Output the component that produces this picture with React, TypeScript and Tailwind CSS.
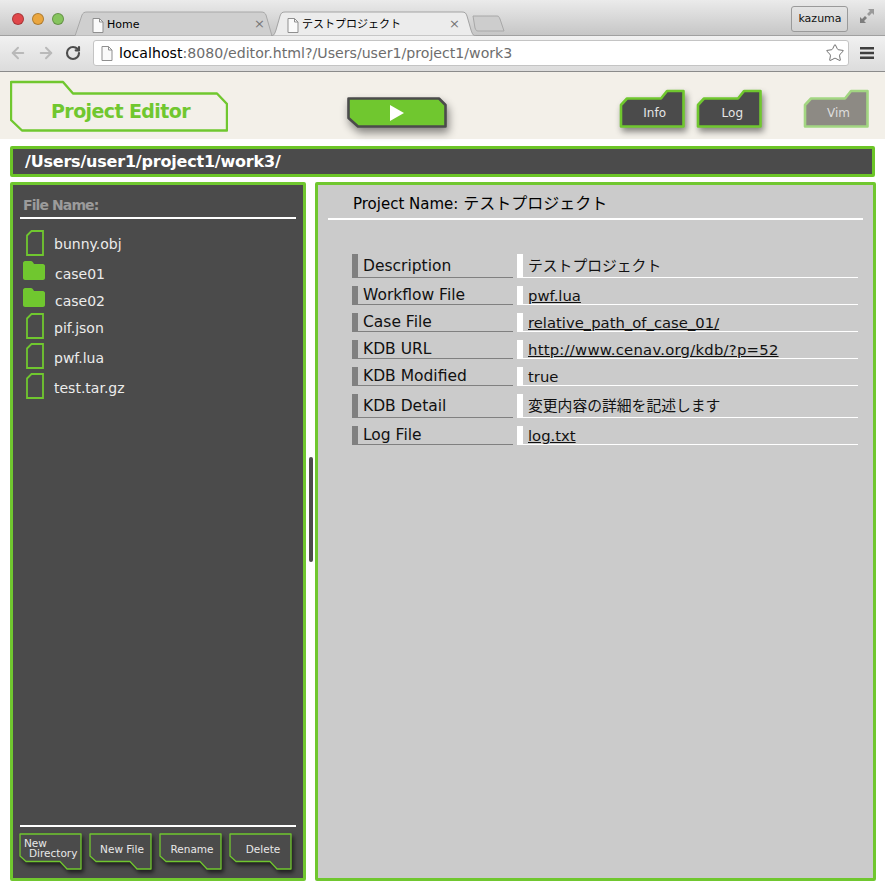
import { ArrowLeft, ArrowRight, RotateCw, Star } from 'lucide-react';
import type { ReactNode } from 'react';

const FONT = 'font-["DejaVu_Sans","Noto_Sans_CJK_JP",sans-serif]';
const GREEN = '#70c72f';

function PageIcon() {
  return (
    <svg width="12" height="15" viewBox="0 0 12 15" className="shrink-0">
      <path d="M1 .5H7.5L11 4V14.5H1Z" fill="#fafafa" stroke="#8f8f8f" />
      <path d="M7.5 .5V4H11" fill="none" stroke="#8f8f8f" />
    </svg>
  );
}

function Tab({ title, active, x }: { title: string; active?: boolean; x: string }) {
  return (
    <div className={`relative flex h-[25px] items-center pt-[3px] ${active ? 'w-[205px] -ml-[4px] pl-[16px] z-10' : 'w-[200px] pl-[17px]'}`}>
      <svg className="absolute inset-0" width="100%" height="25" viewBox={active ? '0 0 205 25' : '0 0 200 25'}>
        {active ? (
          <path d="M0 25C3 25 4 22 5 19L9 5C10 2 11 1 14 1H191C194 1 195 2 196 5L200 19C201 22 202 25 205 25Z" fill="#ececec" stroke="#a3a3a3" />
        ) : (
          <path d="M0 25L7 4C8 2 9 1 12 1H186C189 1 190 2 191 4L197 25Z" fill="#cfcfcf" stroke="#a8a8a8" />
        )}
      </svg>
      <div className="relative flex items-center gap-[3px]">
        <PageIcon />
        <span className="text-[11px] text-black">{title}</span>
      </div>
      <span className={`absolute top-[5px] text-[13px] leading-[16px] text-[#777] ${x}`}>×</span>
    </div>
  );
}

function Light({ color }: { color: string }) {
  return <span className={`h-[12px] w-[12px] rounded-full border border-black/25 ${color}`} />;
}

function BrowserChrome() {
  return (
    <div className="h-[72px] shrink-0">
      <div className="flex h-[36px] items-end border-b border-[#a0a0a0] bg-gradient-to-b from-[#ebebeb] to-[#c6c6c6]">
        <div className="flex w-[75px] shrink-0 gap-[8px] self-start pl-[12px] pt-[13px]">
          <Light color="bg-[#e0474a]" />
          <Light color="bg-[#eaa63f]" />
          <Light color="bg-[#86c45e]" />
        </div>
        <div className="flex -mb-px">
          <Tab title="Home" x="left-[179px]" />
          <Tab title="テストプロジェクト" active x="left-[178px]" />
        </div>
        <svg width="33" height="17" viewBox="0 0 33 17" className="mb-[3px] -ml-[4px] shrink-0">
          <path d="M1 1H25C27 1 27 2 28 4L32 16H6C4 16 4 15 3 13Z" fill="#cdcdcd" stroke="#a8a8a8" />
        </svg>
        <div className="flex-1" />
        <div className="mb-[3px] flex h-[26px] w-[57px] shrink-0 items-center justify-center rounded-[3px] border border-[#9a9a9a] bg-gradient-to-b from-[#e4e4e4] to-[#d2d2d2] pl-[1px] pt-[1px] text-[11px] text-[#111]">
          kazuma
        </div>
        <svg width="16" height="16" viewBox="0 0 16 16" className="mb-[11px] ml-[11px] mr-[10px] shrink-0">
          <path d="M9 1H15V7L13 5L10 8L8 6L11 3Z" fill="#9a9a9a" />
          <path d="M1 9V15H7L5 13L8 10L6 8L3 11Z" fill="#7d7d7d" />
        </svg>
      </div>
      <div className="flex h-[36px] items-center border-b border-[#8b8b8b] bg-gradient-to-b from-[#f1f1f1] to-[#dcdcdc] pb-[1px]">
        <ArrowLeft size={18} strokeWidth={2.6} className="ml-[9px] shrink-0 text-[#b9b9b9]" />
        <ArrowRight size={18} strokeWidth={2.6} className="ml-[10px] shrink-0 text-[#b9b9b9]" />
        <RotateCw size={16} strokeWidth={3.2} className="ml-[10px] shrink-0 text-[#4d4d4d]" />
        <div className="ml-[12px] flex h-[26px] w-[756px] shrink-0 items-center rounded-[3px] border border-[#c4c4c4] bg-white pl-[7px] pr-[3px]">
          <PageIcon />
          <span className="ml-[6px] flex-1 pt-[1px] text-[14.15px] text-[#6d6d6d]">
            <span className="text-black">localhost</span>:8080/editor.html?/Users/user1/project1/work3
          </span>
          <Star size={20} strokeWidth={1} className="shrink-0 text-[#555]" />
        </div>
        <svg width="14" height="14" viewBox="0 0 14 14" className="ml-[11px] shrink-0">
          <path d="M0 1H14V3.5H0ZM0 5.8H14V8.3H0ZM0 10.5H14V13H0Z" fill="#3f3f3f" />
        </svg>
      </div>
    </div>
  );
}

// 角を落としたボタン類はSVGで枠線を描く
function TabButton({ label, dim, left }: { label: string; dim?: boolean; left?: string }) {
  return (
    <div className={`relative mt-[17px] flex h-[39px] w-[66px] shrink-0 items-center justify-end pr-[19px] pt-[9px] ${left ?? ''}`}>
      <svg
        className={`absolute inset-0 ${dim ? '' : 'drop-shadow-[2px_4px_3px_rgba(0,0,0,0.45)]'}`}
        width="66"
        height="39"
        viewBox="0 0 66 39"
      >
        <path
          d="M2 16L8 9.5H42L48 2H64.500V37.500H2Z"
          fill={dim ? '#8d8a84' : '#4b4b4b'}
          stroke={dim ? '#a3d682' : GREEN}
          strokeWidth="2.600"
          strokeLinejoin="round"
        />
      </svg>
      <span className={`relative text-[12px] ${dim ? 'text-[#ddd]' : 'text-[#e6e6e6]'}`}>{label}</span>
    </div>
  );
}

function Header() {
  return (
    <div className="flex h-[67px] shrink-0 items-start bg-[#f3f0e9] pl-[10px]">
      <div className="relative mt-[8px] flex h-[52px] w-[218px] shrink-0 items-center justify-center pl-[3px] pt-[10px]">
        <svg className="absolute inset-0" width="218" height="52" viewBox="0 0 218 52">
          <path d="M1 2H53L63 13.500H207L217 24V50.500H12L1 40Z" fill="none" stroke={GREEN} strokeWidth="2.400" strokeLinejoin="round" />
        </svg>
        <span className="relative text-[19px] font-bold tracking-[-0.6px]" style={{ color: GREEN }}>Project Editor</span>
      </div>
      <div className="relative ml-[119px] mt-[25px] flex h-[31px] w-[100px] shrink-0 items-center justify-center">
        <svg className="absolute inset-0 drop-shadow-[2px_5px_4px_rgba(0,0,0,0.45)]" width="100" height="31" viewBox="0 0 100 31">
          <path d="M1.500 1.500H92L98.500 8V29.500H11L1.500 21Z" fill={GREEN} stroke="#4b4b4b" strokeWidth="2.600" strokeLinejoin="round" />
        </svg>
        <svg className="relative" width="14" height="16" viewBox="0 0 14 16">
          <path d="M0 0L14 8L0 16Z" fill="#fff" />
        </svg>
      </div>
      <TabButton label="Info" left="ml-[172px]" />
      <TabButton label="Log" left="ml-[11px]" />
      <TabButton label="Vim" dim left="ml-[41px]" />
    </div>
  );
}

function FileIcon() {
  return (
    <svg width="18" height="26" viewBox="0 0 18 26" className="ml-[3px] mr-[10px] shrink-0">
      <path d="M1 5.500L5.500 1H17V25H1Z" fill="none" stroke={GREEN} strokeWidth="1.800" />
    </svg>
  );
}

function FolderIcon() {
  return (
    <svg width="22" height="19" viewBox="0 0 22 19" className="mr-[10px] shrink-0">
      <path d="M0 2C0 1 1 0 2 0H8C9 0 10 1 11 3H20C21 3 22 4 22 5V17C22 18 21 19 20 19H2C1 19 0 18 0 17Z" fill={GREEN} />
    </svg>
  );
}

const files = [
  { name: 'bunny.obj', folder: false, cls: 'h-[30px] leading-[28px]' },
  { name: 'case01', folder: true, cls: 'h-[27px] pt-[1px] leading-[26px]' },
  { name: 'case02', folder: true, cls: 'h-[26px] pt-[1px] leading-[26px]' },
  { name: 'pif.json', folder: false, cls: 'h-[30px] leading-[30px]' },
  { name: 'pwf.lua', folder: false, cls: 'h-[30px] leading-[30px]' },
  { name: 'test.tar.gz', folder: false, cls: 'h-[30px] leading-[30px]' },
];

function ActionButton({ children, cls }: { children: ReactNode; cls?: string }) {
  return (
    <div className={`relative flex h-[37px] w-[63px] shrink-0 text-[10.5px] text-[#e8e8e8] ${cls ?? ''}`}>
      <svg className="absolute inset-0 drop-shadow-[2px_3px_2px_rgba(0,0,0,0.6)]" width="63" height="37" viewBox="0 0 63 37">
        <path d="M1 1H62V36H48L41 28.500H7L1 23Z" fill="#4b4b4b" stroke={GREEN} strokeWidth="1.300" strokeLinejoin="round" />
      </svg>
      {children}
    </div>
  );
}

function FilePanel() {
  return (
    <div className="flex h-[699px] w-[296px] shrink-0 flex-col rounded-[2px] border-[3px] border-[#70c72f] bg-[#4b4b4b] px-[7px] pb-[8px]">
      <div className="h-[32px] pl-[3px] pt-[10px] text-[14px] font-bold leading-[20px] tracking-[-0.9px] text-[#9b9b9b]">File Name:</div>
      <div className="h-[2px] bg-white" />
      <div className="mt-[11px] flex-1 pl-[3px]">
        {files.map((f) => (
          <div key={f.name} className={`flex items-start text-[14px] text-[#ececec] ${f.cls}`}>
            {f.folder ? <FolderIcon /> : <FileIcon />}
            <span>{f.name}</span>
          </div>
        ))}
      </div>
      <div className="h-[2px] bg-white" />
      <div className="mt-[6px] flex gap-[7px] -ml-px">
        <ActionButton>
          <span className="relative pl-[5px] pt-[5px] leading-[10px]">
            New
            <br />
            <span className="pl-[5px]">Directory</span>
          </span>
        </ActionButton>
        <ActionButton cls="items-start justify-center pl-[3px] pt-[9px]"><span className="relative">New File</span></ActionButton>
        <ActionButton cls="items-start justify-center pl-[3px] pt-[9px]"><span className="relative">Rename</span></ActionButton>
        <ActionButton cls="items-start justify-center pl-[5px] pt-[9px]"><span className="relative">Delete</span></ActionButton>
      </div>
    </div>
  );
}

const rows = [
  { label: 'Description', value: 'テストプロジェクト', h: 'h-[24px]' },
  { label: 'Workflow File', value: 'pwf.lua', link: true, h: 'h-[19px]' },
  { label: 'Case File', value: 'relative_path_of_case_01/', link: true, h: 'h-[19px]' },
  { label: 'KDB URL', value: 'http://www.cenav.org/kdb/?p=52', link: true, wide: true, h: 'h-[19px]' },
  { label: 'KDB Modified', value: 'true', h: 'h-[19px]' },
  { label: 'KDB Detail', value: '変更内容の詳細を記述します', h: 'h-[24px]' },
  { label: 'Log File', value: 'log.txt', link: true, h: 'h-[19px]' },
];

function InfoPanel() {
  return (
    <div className="h-[699px] w-[561px] shrink-0 rounded-[2px] border-[3px] border-[#70c72f] bg-[#cbcbcb] pl-[10px] pr-[10px]">
      <div className="h-[33px] pl-[25px] pt-[9px] text-[15px] leading-[20px] text-black">
        Project Name: <span className="text-[16px]">テストプロジェクト</span>
      </div>
      <div className="h-[2px] bg-white" />
      <div className="ml-[24px] mt-[34px] flex w-[506px] flex-col gap-[8px]">
        {rows.map((r) => (
          <div key={r.label} className={`flex gap-[4px] ${r.h}`}>
            <div className="flex w-[161px] items-center border-b border-l-[6px] border-[#808080] pl-[5px] pt-[2px] text-[15.5px] text-[#111]">
              {r.label}
            </div>
            <div className="flex flex-1 items-center border-b border-l-[6px] border-white pl-[5px] pt-[2px] text-[14.8px] text-[#111]">
              <span className={`${r.link ? 'underline' : ''} ${r.wide ? 'tracking-[0.25px]' : ''}`}>{r.value}</span>
            </div>
          </div>
        ))}
      </div>
    </div>
  );
}

export default function App() {
  return (
    <div className={`flex h-[891px] w-[885px] flex-col overflow-hidden bg-white ${FONT}`}>
      <BrowserChrome />
      <Header />
      <div className="mx-[10px] mt-[7px] flex h-[31px] items-center rounded-[2px] border-[3px] border-[#6cc527] bg-[#4b4b4b] pl-[12px] text-[16px] font-bold tracking-[-0.2px] text-white">
        /Users/user1/project1/work3/
      </div>
      <div className="mx-[10px] mt-[5px] flex items-start">
        <FilePanel />
        <div className="ml-[3px] mr-[2px] mt-[275px] h-[105px] w-[4px] shrink-0 rounded-full bg-[#4b4b4b]" />
        <InfoPanel />
      </div>
    </div>
  );
}
